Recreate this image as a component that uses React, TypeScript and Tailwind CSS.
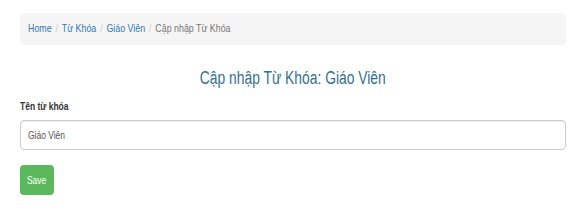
import React from "react";

export default function App() {
  const font = { fontFamily: '"Liberation Sans", Arial, sans-serif' };
  return (
    <div className="w-[575px] h-[223px] bg-white pl-[20px] pr-[9px] pt-[13px] text-[#333]" style={font}>
      <nav className="h-[32px] rounded-[4px] bg-[#f5f5f5] px-[8px] flex items-center text-[11.5px]">
        <div className="flex items-center origin-left scale-x-[0.77] whitespace-nowrap">
          <a className="text-[#337ab7]">Home</a>
          <span className="px-[5px] text-[#ccc]">/</span>
          <a className="text-[#337ab7]">Từ Khóa</a>
          <span className="px-[5px] text-[#ccc]">/</span>
          <a className="text-[#337ab7]">Giáo Viên</a>
          <span className="px-[5px] text-[#ccc]">/</span>
          <span className="text-[#777]">Cập nhập Từ Khóa</span>
        </div>
      </nav>
      <h3 className="mt-[22px] text-center text-[18px] leading-[22px] text-[#31708f]">
        <span className="inline-block scale-x-[0.77] whitespace-nowrap">Cập nhập Từ Khóa: Giáo Viên</span>
      </h3>
      <label className="block mt-[10px] text-[11px] font-bold leading-[14px] text-[#333]">
        <span className="inline-block origin-left scale-x-[0.77] whitespace-nowrap">Tên từ khóa</span>
      </label>
      <div className="mt-[7px] w-full h-[30px] rounded-[4px] border border-[#ccc] px-[7px] flex items-center text-[11px] text-[#555] shadow-[inset_0_1px_1px_rgba(0,0,0,0.075)]">
        <span className="inline-block origin-left scale-x-[0.77] whitespace-nowrap">Giáo Viên</span>
      </div>
      <button className="mt-[15px] h-[30px] w-[34px] rounded-[4px] bg-[#5cb85c] text-white text-[11px] flex items-center justify-center" style={font}>
        <span className="inline-block scale-x-[0.77] whitespace-nowrap">Save</span>
      </button>
    </div>
  );
}
